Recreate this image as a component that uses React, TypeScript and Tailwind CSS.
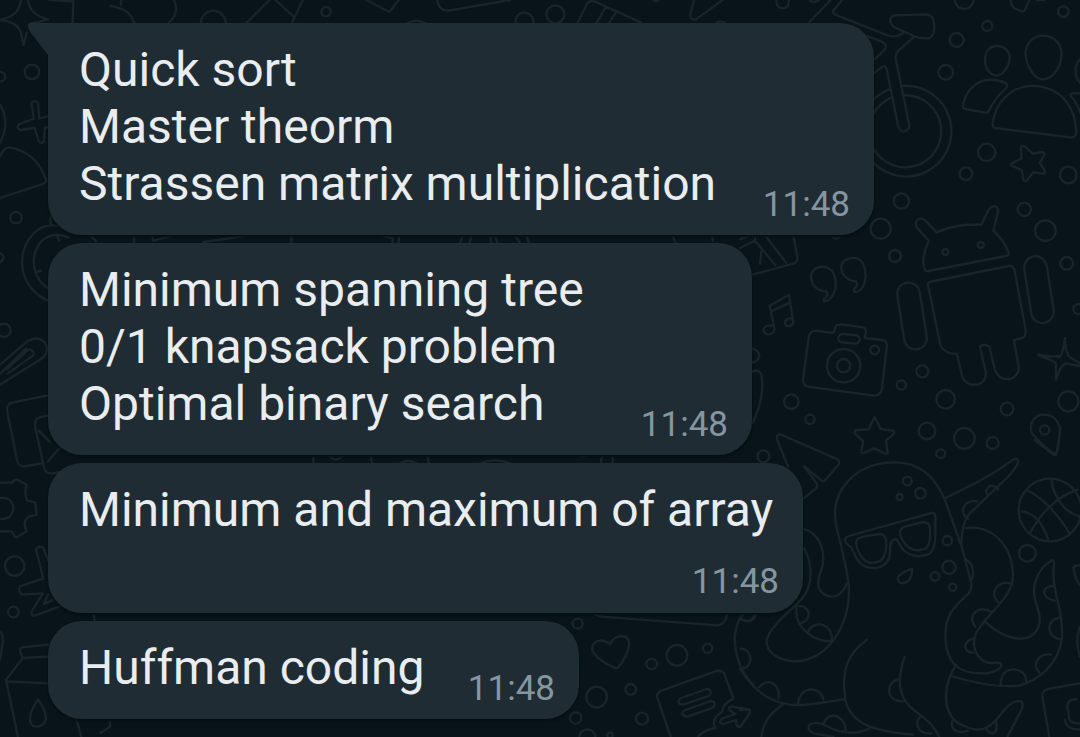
import React from "react";

type Message = { lines: string[]; time: string; width: string; tail?: boolean; stacked?: boolean };

const messages: Message[] = [
  { lines: ["Quick sort", "Master theorm", "Strassen matrix multiplication"], time: "11:48", width: "w-[826px]", tail: true },
  { lines: ["Minimum spanning tree", "0/1 knapsack problem", "Optimal binary search"], time: "11:48", width: "w-[704px]" },
  { lines: ["Minimum and maximum of array"], time: "11:48", width: "w-[755px]", stacked: true },
  { lines: ["Huffman coding"], time: "11:48", width: "w-[531px]" },
];

type Dot = [number, number, number];

function Dots({ items }: { items: Dot[] }) {
  return (
    <>
      {items.map(([x, y, r]) => (
        <circle key={`${x}-${y}`} cx={x} cy={y} r={r} />
      ))}
    </>
  );
}

function Wallpaper() {
  return (
    <svg
      aria-hidden="true"
      className="absolute inset-0 h-full w-full"
      viewBox="0 0 3240 2211"
      preserveAspectRatio="xMinYMin slice"
      fill="none"
      stroke="#18242a"
      strokeWidth="7"
      strokeLinecap="round"
      strokeLinejoin="round"
    >
      {/* bicycle, people, star */}
      <g transform="translate(2220 0)">
        <path d="M208 66L272 0M306 0L280 32Q276 40 286 44L440 105Q470 116 490 98M463 46L560 43Q584 46 583 84Q582 114 562 115Q540 116 524 109L460 80Q440 54 463 46M524 109L475 152Q465 162 467 176L508 374Q508 392 491 394Q478 393 474 376L440 207Q436 194 424 202L400 220M380 108L425 124Q445 134 433 150L404 178" />
        <path d="M486 258A136 136 0 1 1 386 470M490 286A108 108 0 1 1 394 430M448 268Q420 278 395 304M456 292Q420 306 398 344" />
        <path d="M770 138C800 138 812 160 808 180C804 208 786 226 768 227C748 224 735 204 735 180C735 156 748 138 770 138ZM910 107C948 108 968 138 964 170C960 212 932 240 905 238C878 234 856 190 857 156C860 126 882 107 910 107ZM669 315Q682 258 730 242Q766 234 798 250Q806 256 798 264Q760 300 746 334Q742 340 734 338L676 327Q667 324 669 315ZM758 374Q764 306 824 270Q880 244 940 272Q1004 306 1009 396Q1008 414 992 412L764 384Q758 382 758 374ZM1020 178Q1006 190 1007 214Q1007 234 1020 248M1020 280L998 280Q986 282 996 292Q1010 308 1020 336" />
        <path d="M842 442Q848 434 858 442L878 461L908 456Q915 457 912 465L900 488L915 514Q916 522 907 521L880 517L860 542Q853 547 850 538L845 510L816 498Q810 493 817 489L845 475Z" />
        <path d="M110 0Q108 24 128 25Q148 24 147 0M208 0Q222 12 236 0M644 0Q650 27 674 27Q696 25 702 0M812 0Q812 14 822 24L846 35Q854 35 858 22L869 0M890 0L912 0" />
        <Dots items={[[650,120,21],[742,78,15],[970,35,16],[617,217,22],[740,457,26],[678,521,19],[985,525,25],[484,603,23],[422,686,30],[853,628,20],[916,692,31],[722,735,9],[465,768,18],[288,702,14]]} />
        {/* robot */}
        <path d="M556 812Q540 784 566 722L530 682Q522 658 543 655Q552 656 562 668L590 697Q650 670 724 674L744 632Q754 616 768 620Q778 626 772 644L760 692Q792 720 806 758Q808 766 798 768L564 813Q558 814 556 812Z" />
        <path d="M568 846L806 798Q819 796 823 808L856 985Q860 1008 846 1014L822 1020L836 1100Q838 1124 814 1136Q778 1144 765 1110L748 1040Q732 1028 720 1040L737 1116Q740 1144 714 1153Q680 1160 667 1130L651 1062Q616 1062 602 1038L564 856Q562 848 568 846Z" />
        <rect x="482" y="847" width="68" height="202" rx="34" transform="rotate(-9 516 948)" />
        <rect x="863" y="768" width="68" height="202" rx="34" transform="rotate(-9 897 869)" />
        <circle cx="616" cy="756" r="9" />
      </g>
      {/* quotes, notes, camera */}
      <g transform="translate(2220 690)">
        <path d="M38 134L162 100Q174 94 172 80L160 18M0 54L45 32L106 106M74 14L138 98M0 28L32 16M64 64L60 100M45 32L45 14" />
        <path d="M258 184Q236 184 220 166Q204 130 226 116Q254 102 276 122Q300 166 274 202Q264 214 252 215Q248 208 258 202Q266 194 258 184ZM348 154Q324 154 308 130Q296 100 320 88Q348 76 368 98Q386 136 368 172Q358 186 344 186Q338 178 348 172Q354 162 348 154Z" />
        <path d="M104 298L89 227L147 194L160 278M94 244L151 217M104 298Q100 314 82 313Q66 308 72 294Q82 282 102 288M160 278Q154 292 140 288Q130 278 140 268Q150 262 158 268" />
        <path d="M206 322Q210 302 228 302L278 309Q282 308 284 300L288 286L306 283L368 292Q380 294 378 306L374 324L424 330Q442 332 441 346L426 476Q422 496 402 497L204 470Q188 466 189 448Z" />
        <rect x="295" y="314" width="64" height="25" rx="12" transform="rotate(5 327 326)" />
        <Dots items={[[311,407,50],[311,407,20],[404,360,13],[465,78,18],[547,424,18],[484,465,14],[617,508,28],[801,537,19],[985,514,30],[980,100,19],[1015,237,15],[154,515,22],[210,568,14],[561,603,25],[673,625,31],[758,639,18],[602,671,13],[70,679,18],[914,600,14]]} />
        <path d="M975 324Q968 378 956 382M975 324Q976 372 990 382L1020 400M894 373Q936 382 956 378M898 378Q942 390 948 402L948 450Q960 408 976 400L1020 408" />
        <path d="M404 560L422 597L460 602Q466 607 460 612L438 632L443 668Q440 674 432 669L402 655L372 669Q364 672 364 664L370 634L344 610Q342 602 350 600L386 598Z" />
        <path d="M948 675Q888 630 874 606Q866 564 904 554Q950 552 960 596Q960 630 948 675ZM36 356Q58 362 58 378Q56 394 36 398M36 426Q54 414 64 434Q76 500 38 578" />
      </g>
      {/* squid, plane, ball */}
      <g transform="translate(2220 1320)">
        <path d="M144 80L111 -2Q108 -20 124 -16L292 58Q302 64 294 76L256 120Q248 128 240 118L192 78L230 130Q234 140 224 148L192 174" />
        <path d="M326 430Q316 364 292 272C262 156 342 68 464 67C548 66 594 126 618 188L668 330L694 430Q696 448 686 460C644 500 616 520 616 590C620 672 654 704 740 700Q776 694 784 678Q784 666 768 668C720 676 692 630 706 586C718 542 808 484 818 420C826 334 768 254 678 264M664 318C664 278 672 230 700 210L800 114Q828 86 835 64Q832 52 820 58C740 120 672 144 614 176M326 430C334 546 270 664 160 664C104 658 78 632 80 600C92 556 154 510 186 476C226 428 212 360 192 324M320 430C306 470 276 476 254 464C222 446 236 414 248 376C256 330 234 274 192 268" />
        <path d="M674 358Q698 366 699 394Q700 412 692 424M712 184C664 178 658 224 684 236M774 148C754 122 728 150 744 164M810 430C770 422 748 460 774 486M754 516C714 492 678 528 706 560M704 596C670 598 664 636 700 638M734 544C792 600 872 618 896 560C912 516 866 476 888 420Q900 382 934 362Q944 358 942 374C932 456 972 506 966 592C956 676 894 720 840 736C780 744 706 730 634 708M940 438C906 436 900 474 944 482M956 534C918 538 918 594 962 598M934 644C896 638 874 674 898 698M782 734Q784 686 824 688Q860 694 858 724M170 496Q162 548 204 580Q230 602 272 604Q282 588 264 564Q246 548 222 556Q210 562 204 574M178 498C216 500 214 542 182 550" />
        <path d="M648 674C600 750 612 834 668 856C732 890 762 850 788 816Q818 778 842 784Q852 788 846 806L802 891M638 842C628 866 652 884 684 872M738 866C754 892 776 880 768 846M380 600C310 650 306 708 316 780C334 854 404 874 520 884M494 650C470 720 472 774 526 814Q580 850 598 891M474 718C434 730 440 788 490 784M540 830C524 850 532 884 574 880" />
        <path d="M0 686C36 744 80 784 150 794C206 800 258 784 312 778M2 626C42 628 38 684 8 684M58 742C82 712 120 728 116 776M174 790C180 734 244 738 250 778M130 792C88 822 68 850 64 891M0 810L24 808Q34 812 26 826L0 860M2 536Q22 550 34 540L48 518M394 862C352 888 300 880 260 858Q228 842 208 854Q200 874 222 880L280 891M252 848Q264 820 294 830Q320 846 316 878" />
        <path d="M326 288Q310 294 318 310L334 322L352 360Q374 390 416 382Q454 370 450 324Q452 296 470 298L490 330Q524 360 566 342Q588 328 586 272L586 230Q586 214 570 220ZM370 290L418 282Q434 282 438 300Q442 344 422 362Q384 380 364 350Q340 310 354 296ZM494 260L550 246Q568 246 570 264Q574 314 556 326Q514 342 490 304Q468 270 494 260ZM516 386Q480 400 474 412Q470 428 490 430Q518 422 516 386Z" />
        <circle cx="930" cy="210" r="94" />
        <path d="M860 150Q930 184 990 282M934 118C936 150 954 180 972 202Q990 220 1020 230M1012 150C956 164 900 222 872 276M846 214Q900 222 924 298" />
        <path d="M1020 376Q994 376 1002 390Q1004 418 1020 434M1020 560Q1004 604 1020 650M1020 730L928 746Q902 752 908 776L928 891M1020 868Q982 872 974 840M1010 778Q982 776 982 802L988 838Q994 852 1020 850M884 0L940 44Q948 46 950 36L956 0" />
        <Dots items={[[502,123,13],[541,160,16],[479,171,9],[622,302,14],[627,382,20],[585,409,13],[638,442,11],[862,340,25]]} />
      </g>
      {/* heart, shared note */}
      <g transform="translate(1620 1770)">
        <path d="M228 235Q164 206 156 178Q156 154 182 151Q198 152 210 162Q222 138 248 138Q270 142 267 168Q262 198 236 230Q232 236 228 235ZM154 70L186 80L532 106Q556 104 562 70" />
        <path d="M392 440L352 324Q348 310 364 302L526 244Q546 238 554 254L580 326Q566 332 552 346L546 366Q520 378 522 404L526 414Q490 420 474 440" />
        <path d="M424 324L500 297Q514 298 512 310Q510 318 500 320L428 344Q414 342 416 332Q418 326 424 324ZM436 360L512 333Q526 334 524 346Q520 354 512 356L440 380Q426 378 428 368Q430 362 436 360ZM546 386L586 372L568 360Q564 350 576 350L626 358Q634 362 628 370L604 408Q596 414 590 406L588 390L552 402Q540 402 540 394ZM612 70Q590 90 584 140C584 214 612 256 640 284M614 90Q640 100 650 70" />
        <Dots items={[[113,101,15],[335,222,16],[411,196,31],[503,175,14],[272,298,16],[170,321,31],[107,384,17],[306,386,18],[142,442,24],[210,436,8]]} />
      </g>
      {/* left margin */}
      <g>
        <path d="M62 0Q60 48 0 60Q58 66 64 104L71 136L80 98M84 0Q88 44 144 58Q120 66 92 70M148 0L220 4L218 68M332 18Q390 26 402 68M364 0L362 14M522 0Q540 40 506 68M602 68C610 20 670 20 678 68M740 68L808 0M826 0L884 52L908 0M884 52L876 68M1100 0L1168 36L1196 0M1312 0Q1314 32 1346 32L1530 0M1222 70Q1248 54 1276 70" />
        <path d="M94 310Q102 298 114 308L118 356L144 348M94 310L102 356L58 372Q46 382 60 390L104 384L116 424Q122 434 132 424L134 384L144 382M0 314Q32 368 0 428M0 470Q10 444 28 442Q110 456 138 540Q140 548 128 552L0 594" />
        <path d="M145 902A124 124 0 0 1 96 706Q120 676 156 676Q196 674 232 706M145 866A96 96 0 0 1 122 726Q156 692 206 712M170 704L178 722M108 816L124 812M152 676L152 646M0 758Q20 770 0 788M270 704L288 724" />
        <path d="M0 1094L82 1024Q116 1004 136 1030Q150 1058 122 1078L0 1154M20 1108L86 1048Q104 1050 100 1066L24 1120M0 1122L78 1046M144 1186L36 1208Q18 1214 22 1236L52 1384Q60 1404 80 1398L126 1390M144 1246L118 1252Q102 1258 106 1282L132 1404Q138 1422 158 1420L180 1416M116 1292L150 1326M144 1384L182 1340" />
        <path d="M0 1448L36 1448Q42 1438 54 1440L80 1454Q72 1484 82 1502L106 1508L110 1544L86 1550Q66 1564 80 1594L50 1612Q42 1610 36 1594L0 1594M0 1494A32 32 0 1 1 0 1556M144 1680L130 1644Q118 1634 108 1648L130 1736L62 1758Q50 1772 66 1784L128 1780L94 1836Q94 1850 106 1846L182 1818M144 1784L132 1812L158 1800" />
        <path d="M144 1934L66 1942Q58 1946 62 1958L68 1974L144 1970M68 1974L18 2040L54 2211M18 2044L146 2050M114 2098Q74 2158 100 2178Q126 2186 138 2160Q138 2130 114 2098ZM230 2160L244 2211M330 2160L330 2180L300 2200M0 1896Q10 1900 8 1930L0 1980" />
        <Dots items={[[96,216,22],[2,230,14],[48,653,17],[12,991,20],[44,1698,29],[40,1836,16],[978,35,14]]} />
      </g>
      {/* pencil and arrow along the top edge */}
      <g transform="translate(1500 0)">
        <path d="M232 70L262 10Q270 0 284 4L424 68M290 68L318 20M328 68L350 34M582 0L570 46Q572 62 588 58L668 0M46 70Q48 38 72 38Q98 38 102 70M460 0Q468 6 476 0M650 68Q662 60 674 68" />
        <circle cx="166" cy="43" r="27" />
      </g>
      {/* shapes that show between bubbles */}
      <path d="M402 705V730M456 705L460 722L530 704M610 726L750 706M874 705V730M1136 705L1178 714V730M1198 705L1196 730M1388 705L1380 730M1416 705L1408 730M1470 705L1474 730M1486 705L1492 730M1544 705L1560 730M1578 705L1588 730M2018 705L2026 730M2138 705V722" />
      <path d="M940 1364V1390M986 1364Q1008 1392 1030 1364M1112 1364L1116 1390M1200 1390Q1224 1376 1250 1390M1282 1364L1286 1390M1440 1390Q1484 1372 1530 1390M1730 1364Q1750 1376 1766 1364M1804 1390Q1800 1362 1822 1360Q1842 1362 1838 1390M280 1840L284 1866" />
    </svg>
  );
}

function Bubble({ message }: { message: Message }) {
  return (
    <article
      className={`relative flex max-w-full justify-between rounded-[34px] bg-[#202c33] pt-[18px] pr-6 pl-[31px] shadow-[0_2px_2px_#050e13] ${message.width} ${
        message.stacked ? "flex-col pb-3" : "items-end pb-[23px]"
      }`}
    >
      {message.tail && (
        <svg aria-hidden="true" className="absolute top-0 -left-[21px] h-[50px] w-[60px]" viewBox="0 0 60 50" fill="#202c33">
          <path d="M60 0H4Q0 0 1 4Q2 8 8 15L21 32V50L60 40Z" />
        </svg>
      )}
      <div className="relative text-[48px] leading-[57px] text-[#e9edf0]">
        {message.lines.map((line) => (
          <p key={line}>{line}</p>
        ))}
      </div>
      <time className={`relative text-[35px] leading-[38px] text-[#8696a0] ${message.stacked ? "self-end pt-[25px]" : "-mb-3"}`}>
        {message.time}
      </time>
    </article>
  );
}

export default function App() {
  return (
    <main className="relative min-h-screen overflow-hidden bg-[#081419] font-['Roboto',sans-serif]">
      <Wallpaper />
      <section aria-label="Messages" className="relative flex flex-col items-start gap-2 pt-[23px] pb-[18px] pl-12">
        {messages.map((message) => (
          <Bubble key={message.lines[0]} message={message} />
        ))}
      </section>
    </main>
  );
}
